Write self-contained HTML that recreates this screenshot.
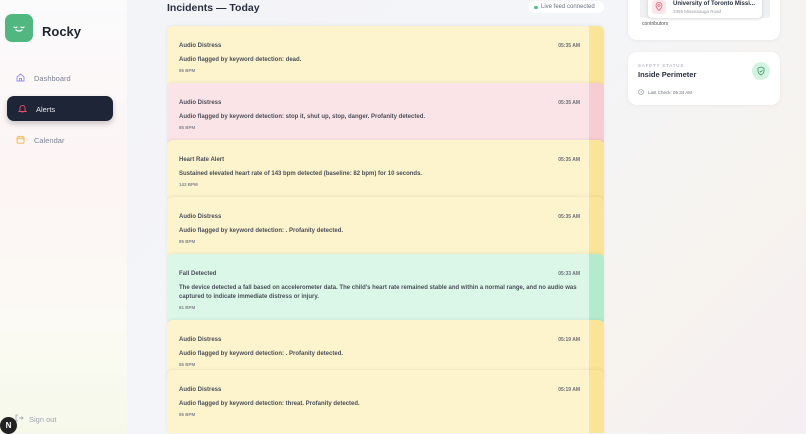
<!DOCTYPE html>
<html><head><meta charset="utf-8"><style>
*{box-sizing:border-box;margin:0;padding:0}
body{width:806px;height:433px;overflow:hidden;font-family:"Liberation Sans",sans-serif;background:linear-gradient(135deg,#f3f4f7 0%,#f4f5f8 50%,#f7f3ee 80%,#f5eef3 100%);position:relative}
.side{position:absolute;left:0;top:0;width:127px;height:433px;background:linear-gradient(180deg,#fbfbfc 0%,#fdf4f4 40%,#fbfaf4 75%,#f6f9ea 100%)}
.logo{position:absolute;left:5px;top:14px;width:28px;height:28px;border-radius:7px;background:#4fb77f}
.brand{position:absolute;left:42px;top:24px;font-size:13px;font-weight:bold;color:#1f2433}
.nav{position:absolute;left:34px;font-size:7.5px;color:#7d8496}
.act{position:absolute;left:7px;top:96px;width:106px;height:25px;border-radius:7px;background:#1e2536;box-shadow:0 3px 6px rgba(0,0,0,.2)}
h1{position:absolute;left:167px;top:2px;font-size:10.5px;font-weight:bold;color:#2a3040}
.live{position:absolute;left:528px;top:1px;width:76px;height:12px;border-radius:6px;background:#fff;font-size:6px;color:#6b7280;padding:3px 0 0 13px}
.live:before{content:"";position:absolute;left:6px;top:4.5px;width:3.5px;height:3.5px;border-radius:50%;background:#4fc08d}
.card{position:absolute;left:167px;width:437px;border-radius:6px 6px 0 0;box-shadow:0 -1px 3px rgba(0,0,0,.06);overflow:hidden}
.card .st{position:absolute;right:0;top:0;bottom:0;width:15px}
.t{position:absolute;left:12px;top:17px;font-size:6px;font-weight:bold;color:#4b4f5a}
.tm{position:absolute;right:24px;top:17px;font-size:5px;color:#6b6f78;font-weight:bold}
.b{position:absolute;left:12px;top:30px;width:405px;font-size:6px;font-weight:bold;color:#4b4f5a;line-height:9px}
.bp{position:absolute;left:12px;font-size:4.5px;font-weight:bold;color:#858892}
.y{background:#fdf3cc}.y .st{background:#f9e498}
.p{background:#fbe4e7}.p .st{background:#f6cdd3}
.g{background:#dbf7e8}.g .st{background:#b4ebcf}
.rc{position:absolute;left:628px;width:152px;background:#fff;border-radius:9px;box-shadow:0 1px 4px rgba(0,0,0,.05)}
</style></head><body>
<div class="side">
<div class="logo"><svg width="28" height="28" viewBox="0 0 28 28"><path d="M9 13q2 1.5 3 0M16 13q2 1.5 3 0M11 16q3 2 6 0" stroke="#fff" stroke-width="1.3" fill="none" stroke-linecap="round"/></svg></div>
<div class="brand">Rocky</div>
<svg style="position:absolute;left:16px;top:73px" width="9" height="9" viewBox="0 0 9 9"><path d="M1 4L4.5 1 8 4V8H1Z M3.5 8V5.5h2V8" stroke="#8b8ff0" fill="none" stroke-width=".9"/></svg>
<div class="nav" style="top:74px">Dashboard</div>
<div class="act"></div>
<svg style="position:absolute;left:18px;top:104px" width="9" height="9" viewBox="0 0 9 9"><path d="M2 6.5V4a2.5 2.5 0 015 0v2.5l1 1H1z M3.5 8h2" stroke="#e0526c" fill="none" stroke-width=".9"/></svg>
<div class="nav" style="top:105px;left:36px;color:#e8eaf0">Alerts</div>
<svg style="position:absolute;left:16px;top:135px" width="9" height="9" viewBox="0 0 9 9"><rect x="1" y="1.8" width="7" height="6.4" rx="1" stroke="#f0b54a" fill="none" stroke-width=".9"/><path d="M1 3.8h7M3 .8v2M6 .8v2" stroke="#f0b54a" stroke-width=".9"/></svg>
<div class="nav" style="top:136px">Calendar</div>
<svg style="position:absolute;left:15px;top:414px" width="9" height="8" viewBox="0 0 9 8"><path d="M3 1H1v6h2M4 4h4M6.5 2.5 8 4 6.5 5.5" stroke="#9aa0ac" fill="none" stroke-width=".8"/></svg>
<div class="nav" style="top:415px;left:29px;color:#a0a5b0">Sign out</div>
<div style="position:absolute;left:0;top:417px;width:17px;height:17px;border-radius:50%;background:#222;color:#fff;font-size:8px;font-weight:bold;text-align:center;line-height:17px">N</div>
</div>
<h1>Incidents — Today</h1>
<div class="live">Live feed connected</div>

<div class="card y" style="top:26px;height:60px"><div class="st"></div><div class="t">Audio Distress</div><div class="tm">05:35 AM</div><div class="b">Audio flagged by keyword detection: dead.</div><div class="bp" style="top:42px">85 BPM</div></div>
<div class="card p" style="top:83px;height:60px"><div class="st"></div><div class="t">Audio Distress</div><div class="tm">05:35 AM</div><div class="b">Audio flagged by keyword detection: stop it, shut up, stop, danger. Profanity detected.</div><div class="bp" style="top:42px">85 BPM</div></div>
<div class="card y" style="top:140px;height:60px"><div class="st"></div><div class="t">Heart Rate Alert</div><div class="tm">05:35 AM</div><div class="b">Sustained elevated heart rate of 143 bpm detected (baseline: 82 bpm) for 10 seconds.</div><div class="bp" style="top:42px">143 BPM</div></div>
<div class="card y" style="top:197px;height:60px"><div class="st"></div><div class="t">Audio Distress</div><div class="tm">05:35 AM</div><div class="b">Audio flagged by keyword detection: . Profanity detected.</div><div class="bp" style="top:42px">85 BPM</div></div>
<div class="card g" style="top:254px;height:68px"><div class="st"></div><div class="t">Fall Detected</div><div class="tm">05:33 AM</div><div class="b">The device detected a fall based on accelerometer data. The child's heart rate remained stable and within a normal range, and no audio was captured to indicate immediate distress or injury.</div><div class="bp" style="top:51px">81 BPM</div></div>
<div class="card y" style="top:320px;height:60px"><div class="st"></div><div class="t" style="top:17px">Audio Distress</div><div class="tm" style="top:17px">05:19 AM</div><div class="b" style="top:30px">Audio flagged by keyword detection: . Profanity detected.</div><div class="bp" style="top:42px">85 BPM</div></div>
<div class="card y" style="top:370px;height:63px"><div class="st"></div><div class="t">Audio Distress</div><div class="tm">05:19 AM</div><div class="b">Audio flagged by keyword detection: threat. Profanity detected.</div><div class="bp" style="top:42px">85 BPM</div></div>

<div class="rc" style="top:-10px;height:50px">
<div style="position:absolute;left:12px;top:8px;width:130px;height:20px;background:#eef0f2;border-radius:3px"></div>
<div style="position:absolute;left:20px;top:7px;width:114px;height:21px;background:#fff;border-radius:4px;box-shadow:0 1px 3px rgba(0,0,0,.15)"></div>
<div style="position:absolute;left:24px;top:10px;width:14px;height:14px;background:#fde7ea;border-radius:3px"></div>
<svg style="position:absolute;left:27px;top:12px" width="8" height="9" viewBox="0 0 8 9"><path d="M4 8.5S1 5.5 1 3.5a3 3 0 016 0C7 5.5 4 8.5 4 8.5z" stroke="#e35b6e" fill="none" stroke-width=".8"/><circle cx="4" cy="3.5" r="1" stroke="#e35b6e" fill="none" stroke-width=".7"/></svg>
<div style="position:absolute;left:45px;top:11px;font-size:6px;font-weight:bold;color:#2a3040">University of Toronto Missi...</div>
<div style="position:absolute;left:45px;top:19px;font-size:4.5px;color:#9ca0aa">3359 Mississauga Road</div>
<div style="position:absolute;left:14px;top:31px;font-size:5px;color:#555">contributors</div>
</div>
<div class="rc" style="top:52px;height:53px">
<div style="position:absolute;left:10px;top:11px;font-size:4.5px;letter-spacing:.8px;color:#a0a4ae">SAFETY STATUS</div>
<div style="position:absolute;left:10px;top:18px;font-size:7.5px;font-weight:bold;color:#2a3040">Inside Perimeter</div>
<div style="position:absolute;left:124px;top:10px;width:18px;height:18px;border-radius:50%;background:#d5f3e2"></div>
<svg style="position:absolute;left:129px;top:14px" width="8" height="10" viewBox="0 0 8 10"><path d="M4 1L7 2.2V5c0 2-1.5 3.2-3 4C2.5 8.2 1 7 1 5V2.2z M2.7 5l1 1 1.8-2" stroke="#3a9a69" fill="none" stroke-width=".8"/></svg>
<svg style="position:absolute;left:10px;top:37px" width="6" height="6" viewBox="0 0 6 6"><circle cx="3" cy="3" r="2.5" stroke="#8a8f9a" fill="none" stroke-width=".6"/><path d="M3 1.7V3l1 .6" stroke="#8a8f9a" fill="none" stroke-width=".6"/></svg>
<div style="position:absolute;left:20px;top:38px;font-size:4.5px;color:#6b7080">Last Check: 05:34 AM</div>
</div>
</body></html>
